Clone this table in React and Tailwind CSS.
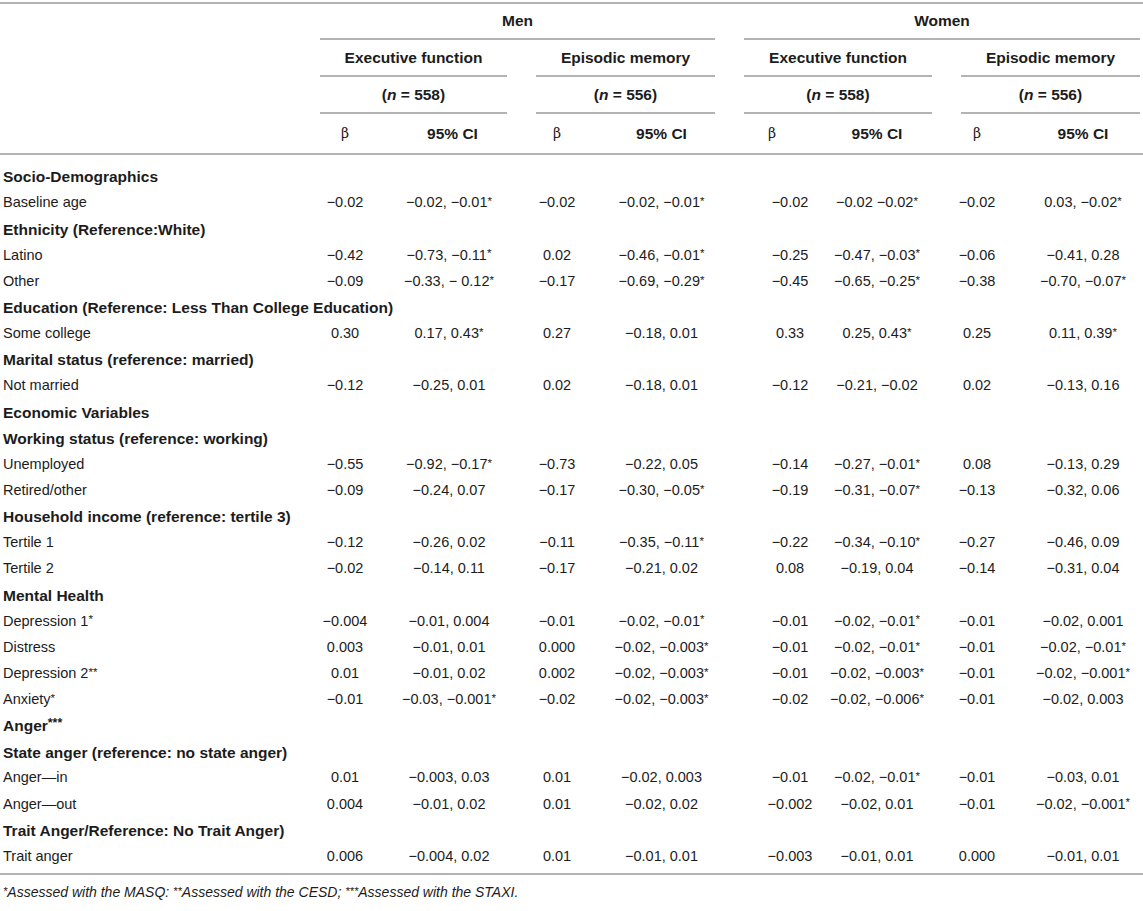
const rows = [
    { h: 'Socio-Demographics' },
    { l: 'Baseline age', v: ['−0.02', '−0.02, −0.01*', '−0.02', '−0.02, −0.01*', '−0.02', '−0.02 −0.02*', '−0.02', '0.03, −0.02*'] },
    { h: 'Ethnicity (Reference:White)' },
    { l: 'Latino', v: ['−0.42', '−0.73, −0.11*', '0.02', '−0.46, −0.01*', '−0.25', '−0.47, −0.03*', '−0.06', '−0.41, 0.28'] },
    { l: 'Other', v: ['−0.09', '−0.33, − 0.12*', '−0.17', '−0.69, −0.29*', '−0.45', '−0.65, −0.25*', '−0.38', '−0.70, −0.07*'] },
    { h: 'Education (Reference: Less Than College Education)' },
    { l: 'Some college', v: ['0.30', '0.17, 0.43*', '0.27', '−0.18, 0.01', '0.33', '0.25, 0.43*', '0.25', '0.11, 0.39*'] },
    { h: 'Marital status (reference: married)' },
    { l: 'Not married', v: ['−0.12', '−0.25, 0.01', '0.02', '−0.18, 0.01', '−0.12', '−0.21, −0.02', '0.02', '−0.13, 0.16'] },
    { h: 'Economic Variables' },
    { h: 'Working status (reference: working)' },
    { l: 'Unemployed', v: ['−0.55', '−0.92, −0.17*', '−0.73', '−0.22, 0.05', '−0.14', '−0.27, −0.01*', '0.08', '−0.13, 0.29'] },
    { l: 'Retired/other', v: ['−0.09', '−0.24, 0.07', '−0.17', '−0.30, −0.05*', '−0.19', '−0.31, −0.07*', '−0.13', '−0.32, 0.06'] },
    { h: 'Household income (reference: tertile 3)' },
    { l: 'Tertile 1', v: ['−0.12', '−0.26, 0.02', '−0.11', '−0.35, −0.11*', '−0.22', '−0.34, −0.10*', '−0.27', '−0.46, 0.09'] },
    { l: 'Tertile 2', v: ['−0.02', '−0.14, 0.11', '−0.17', '−0.21, 0.02', '0.08', '−0.19, 0.04', '−0.14', '−0.31, 0.04'] },
    { h: 'Mental Health' },
    { l: 'Depression 1*', v: ['−0.004', '−0.01, 0.004', '−0.01', '−0.02, −0.01*', '−0.01', '−0.02, −0.01*', '−0.01', '−0.02, 0.001'] },
    { l: 'Distress', v: ['0.003', '−0.01, 0.01', '0.000', '−0.02, −0.003*', '−0.01', '−0.02, −0.01*', '−0.01', '−0.02, −0.01*'] },
    { l: 'Depression 2**', v: ['0.01', '−0.01, 0.02', '0.002', '−0.02, −0.003*', '−0.01', '−0.02, −0.003*', '−0.01', '−0.02, −0.001*'] },
    { l: 'Anxiety*', v: ['−0.01', '−0.03, −0.001*', '−0.02', '−0.02, −0.003*', '−0.02', '−0.02, −0.006*', '−0.01', '−0.02, 0.003'] },
    { h: 'Anger***' },
    { h: 'State anger (reference: no state anger)' },
    { l: 'Anger—in', v: ['0.01', '−0.003, 0.03', '0.01', '−0.02, 0.003', '−0.01', '−0.02, −0.01*', '−0.01', '−0.03, 0.01'] },
    { l: 'Anger—out', v: ['0.004', '−0.01, 0.02', '0.01', '−0.02, 0.02', '−0.002', '−0.02, 0.01', '−0.01', '−0.02, −0.001*'] },
    { h: 'Trait Anger/Reference: No Trait Anger)' },
    { l: 'Trait anger', v: ['0.006', '−0.004, 0.02', '0.01', '−0.01, 0.01', '−0.003', '−0.01, 0.01', '0.000', '−0.01, 0.01'] },
]

const grid = 'grid grid-cols-[306px_78px_137px_72px_137px_84px_132px_62px_135px]'
const valueCls = ['', 'pr-[7px]', '', '', 'pl-[36px]', 'pr-[6px]', '', 'pl-[15px]']
const headCls = ['', '', '', '', '', 'pr-[6px]', '', 'pl-[15px]']

// asterisks sit small and raised in the source
function Stars({ text }) {
    const m = text.match(/^(.*?)(\*+)$/)
    if (!m) return text
    return (
        <>
            {m[1]}
            <span className="text-[0.8em] relative top-[-0.2em]">{m[2]}</span>
        </>
    )
}

export default function App() {
    return (
        <div className="w-[1143px] min-h-[911px] bg-white text-[#1c1c1c] font-['Liberation_Sans',Arial,sans-serif]">
            <div className="h-[2px] mt-[2px] bg-[#b3b3b3]" />

            {/* group headers */}
            <div className={`${grid} text-[15.5px] font-bold`}>
                <div className="col-start-2 col-span-4 pl-[14px] pr-[15px]">
                    <div className="h-[36px] flex items-center justify-center border-b-2 border-[#b3b3b3]">Men</div>
                </div>
                <div className="col-span-4 pl-[14px] pr-[3px]">
                    <div className="h-[36px] flex items-center justify-center border-b-2 border-[#b3b3b3]">Women</div>
                </div>
            </div>
            <div className={`${grid} text-[15.5px] font-bold`}>
                <div className="col-start-2 col-span-2 px-[14px]">
                    <div className="h-[37px] flex items-center justify-center border-b-2 border-[#b3b3b3]">Executive function</div>
                </div>
                <div className="col-span-2 px-[15px]">
                    <div className="h-[37px] flex items-center justify-center border-b-2 border-[#b3b3b3]">Episodic memory</div>
                </div>
                <div className="col-span-2 px-[14px]">
                    <div className="h-[37px] flex items-center justify-center border-b-2 border-[#b3b3b3]">Executive function</div>
                </div>
                <div className="col-span-2 pl-[15px] pr-[3px]">
                    <div className="h-[37px] flex items-center justify-center border-b-2 border-[#b3b3b3]">Episodic memory</div>
                </div>
            </div>
            <div className={`${grid} text-[15.5px] font-bold`}>
                {['558', '556', '558', '556'].map((n, i) => (
                    <div
                        key={i}
                        className={
                            i === 0 ? 'col-start-2 col-span-2 px-[14px]'
                                : i === 1 ? 'col-span-2 px-[15px]'
                                    : i === 2 ? 'col-span-2 px-[14px]'
                                        : 'col-span-2 pl-[15px] pr-[3px]'
                        }
                    >
                        <div className="h-[37px] flex items-center justify-center border-b-2 border-[#b3b3b3]">
                            (<span className="italic">n</span>&nbsp;= {n})
                        </div>
                    </div>
                ))}
            </div>
            <div className={`${grid} h-[41px] border-b-2 border-[#b3b3b3]`}>
                <div />
                {headCls.map((c, i) => (
                    <div key={i} className={`flex items-center justify-center ${c}`}>
                        {i % 2 === 0 ? (
                            <span className="font-['DejaVu_Serif',serif] text-[14px]">β</span>
                        ) : (
                            <span className="text-[15.5px] font-bold">95% CI</span>
                        )}
                    </div>
                ))}
            </div>

            {/* body */}
            <div className="pt-[9px] pb-[3px] border-b-2 border-[#b3b3b3]">
                {rows.map((r, i) =>
                    r.h ? (
                        <div key={i} className="h-[26.15px] flex items-center pl-[3px] text-[15.5px] font-bold whitespace-nowrap">
                            <Stars text={r.h} />
                        </div>
                    ) : (
                        <div key={i} className={`${grid} h-[26.15px] text-[14.5px]`}>
                            <div className="flex items-center pl-[3px] whitespace-nowrap">
                                <Stars text={r.l} />
                            </div>
                            {r.v.map((v, j) => (
                                <div key={j} className={`flex items-center justify-center whitespace-nowrap ${valueCls[j]}`}>
                                    <Stars text={v} />
                                </div>
                            ))}
                        </div>
                    )
                )}
            </div>

            <p className="pt-[8px] pl-[3px] text-[14px] italic leading-[18px]">
                <Stars text="*" />Assessed with the MASQ: <Stars text="**" />Assessed with the CESD; <Stars text="***" />Assessed with the STAXI.
            </p>
        </div>
    )
}
